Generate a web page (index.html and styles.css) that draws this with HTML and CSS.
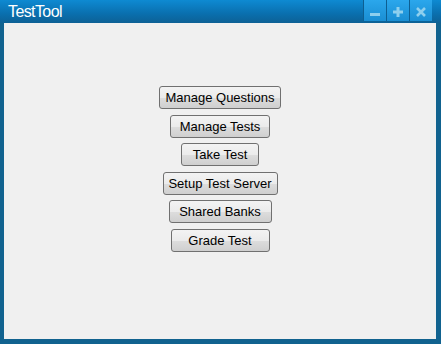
FILE: index.html
```html
<!DOCTYPE html>
<html>
<head>
    <meta charset="utf-8" />
    <title>TestTool</title>
    <link rel="stylesheet" href="styles.css">
</head>
<body>
<div class="window">
    <div class="titleBar">
        <span class="title">TestTool</span>
        <div class="winButtons">
            <div class="winButton">
                <svg width="10" height="10" viewBox="0 0 10 10"><rect x="0" y="6" width="10" height="3" fill="#8ecfee"/></svg>
            </div>
            <div class="winButton">
                <svg width="10" height="10" viewBox="0 0 10 10"><rect x="0" y="3.5" width="10" height="3" fill="#8ecfee"/><rect x="3.5" y="0" width="3" height="10" fill="#8ecfee"/></svg>
            </div>
            <div class="winButton">
                <svg width="10" height="10" viewBox="0 0 10 10"><path d="M1 1 L9 9 M9 1 L1 9" stroke="#8ecfee" stroke-width="2.6"/></svg>
            </div>
        </div>
    </div>
    <div class="content">
        <div class="menu">
            <input type="button" class="buttonClass w122" value="Manage Questions">
            <input type="button" class="buttonClass w100" value="Manage Tests">
            <input type="button" class="buttonClass w78" value="Take Test">
            <input type="button" class="buttonClass w115" value="Setup Test Server">
            <input type="button" class="buttonClass w103" value="Shared Banks">
            <input type="button" class="buttonClass w99" value="Grade Test">
        </div>
    </div>
</div>
</body>
</html>
```

FILE: styles.css
```css
html, body {
    margin: 0; padding: 0; width: 441px; height: 344px;
    background-color: #11628f;
}
.window {
    display: flex; flex-direction: column;
    height: 339px; width: 432px;
    padding: 0 5px 5px 4px;
}
.titleBar {
    display: flex; align-items: flex-start;
    height: 23px; margin: 0 -5px 0 -4px;
    background: linear-gradient(#0e8ad2, #0a6fae 60%, #0d6195);
}
.title {
    font-family: "Liberation Sans", Arial, sans-serif; color: #fff; font-size: 16px;
    letter-spacing: -0.6px;
    line-height: 23px; padding-left: 8px;
    flex: 1;
}
.winButtons {
    display: flex; margin-right: 9px;
}
.winButton {
    width: 22px; height: 21px;
    display: flex; align-items: center; justify-content: center;
    background: linear-gradient(#2ba7ec, #1a8ed3);
    border-left: 1px solid #0d5f92;
}
.winButton svg {
    margin-top: 2px;
}
.content {
    flex: 1;
    background-color: #f0f0f0;
}
.menu {
    display: flex; flex-direction: column; align-items: center;
    gap: 5.5px; padding-top: 63px;
}
.buttonClass {
    font-family: "Liberation Sans", Arial, sans-serif; color: #000; font-size: 13px;
    height: 23px; padding: 0;
    border: 1px solid #707070; border-radius: 3px;
    background: linear-gradient(#f3f3f3, #ebebeb 50%, #dddddd 51%, #cfcfcf);
    -webkit-appearance: none;
}
.w122 { width: 122px; }
.w100 { width: 100px; }
.w78 { width: 78px; }
.w115 { width: 115px; }
.w103 { width: 103px; }
.w99 { width: 99px; }
```
